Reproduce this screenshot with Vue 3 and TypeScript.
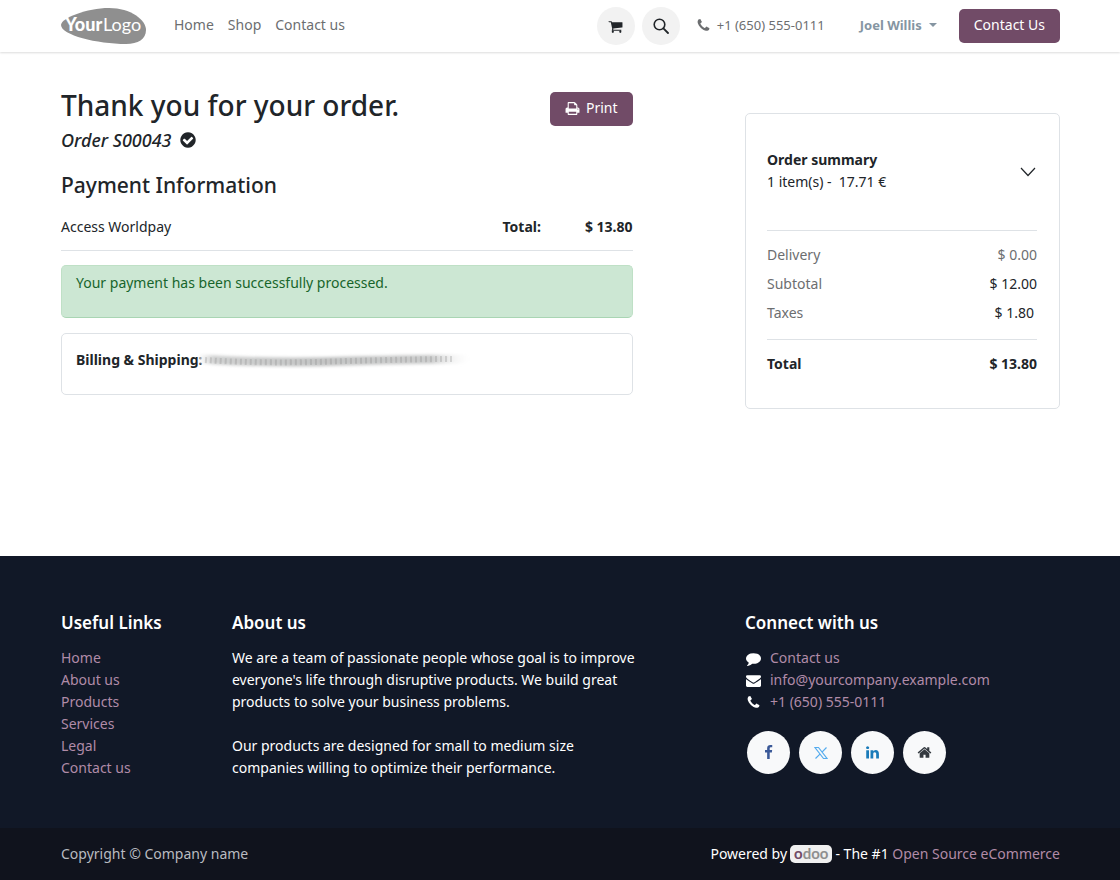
<script setup lang="ts">
import { ref } from 'vue'

interface Row {
  label: string
  amount: string
  kind: string
}

const navLinks: string[] = ['Home', 'Shop', 'Contact us']
const usefulLinks: string[] = ['Home', 'About us', 'Products', 'Services', 'Legal', 'Contact us']

const rows: Row[] = [
  { label: 'Delivery', amount: '$ 0.00', kind: 'muted' },
  { label: 'Subtotal', amount: '$ 12.00', kind: 'plain' },
  { label: 'Taxes', amount: '$ 1.80', kind: 'inset' },
]

const open = ref<boolean>(true)

const icons = {
  cart: 'M704 1536q0 52-38 90t-90 38-90-38-38-90 38-90 90-38 90 38 38 90zm896 0q0 52-38 90t-90 38-90-38-38-90 38-90 90-38 90 38 38 90zm128-1088v512q0 24-16.5 42.5t-40.5 21.5l-1044 122q13 60 13 70 0 16-24 64h920q26 0 45 19t19 45-19 45-45 19h-1024q-26 0-45-19t-19-45q0-11 8-31.5t16-36 21.5-40 15.5-29.5l-177-823h-204q-26 0-45-19t-19-45 19-45 45-19h256q16 0 28.5 6.5t19.5 15.5 13 24.5 8 26 5.5 29.5 4.5 26h1201q26 0 45 19t19 45z',
  phone: 'M1600 1240q0 27-10 70.5t-21 68.5q-21 50-122 106-94 51-186 51-27 0-53-3.5t-57.5-12.5-47-14.5-55.5-20.5-49-18q-98-35-175-83-127-79-264-216t-216-264q-48-77-83-175-3-9-18-49t-20.5-55.5-14.5-47-12.5-57.5-3.5-53q0-92 51-186 56-101 106-122 25-11 68.5-21t70.5-10q14 0 21 3 18 6 53 76 11 19 30 54t35 63.5 31 53.5q3 4 17.5 25t21.5 35.5 7 28.5q0 20-28.5 50t-62 55-62 53-28.5 46q0 9 5 22.5t8.5 20.5 14 24 11.5 19q76 137 174 235t235 174q2 1 19 11.5t24 14 20.5 8.5 22.5 5q18 0 46-28.5t53-62 55-62 50-28.5q14 0 28.5 7t35.5 21.5 25 17.5q25 15 53.5 31t63.5 35 54 30q70 35 76 53 3 7 3 21z',
  check: 'M1412 734q0-28-18-46l-91-90q-19-19-45-19t-45 19l-408 407-226-226q-19-19-45-19t-45 19l-91 90q-18 18-18 46 0 27 18 45l362 362q19 19 45 19 27 0 46-19l543-543q18-18 18-45zm252 162q0 209-103 385.5t-279.5 279.5-385.5 103-385.5-103-279.5-279.5-103-385.5 103-385.5 279.5-279.5 385.5-103 385.5 103 279.5 279.5 103 385.5z',
  print: 'M448 1536h896v-256h-896v256zm0-640h896v-384h-160q-40 0-68-28t-28-68v-160h-640v640zm1152 64q0-26-19-45t-45-19-45 19-19 45 19 45 45 19 45-19 19-45zm128 0v416q0 13-9.5 22.5t-22.5 9.5h-224v160q0 40-28 68t-68 28h-960q-40 0-68-28t-28-68v-160h-224q-13 0-22.5-9.5t-9.5-22.5v-416q0-79 56.5-135.5t135.5-56.5h64v-544q0-40 28-68t68-28h672q40 0 88 20t76 48l152 152q28 28 48 76t20 88v256h64q79 0 135.5 56.5t56.5 135.5z',
  comment: 'M1792 896q0 174-120 321.5t-326 233-450 85.5q-70 0-145-8-198 175-460 242-49 14-114 22-17 2-30.5-9t-17.5-29v-1q-3-4-.5-12t2-10 4.5-9.5l6-9 7-8.5 8-9q7-8 31-34.5t34.5-38 31-39.5 32.5-51 27-59 26-76q-157-89-247.5-220t-90.5-281q0-130 71-248.5t191-204.5 286-136.5 348-50.5q244 0 450 85.5t326 233 120 321.5z',
  envelope: 'M1792 710v794q0 66-47 113t-113 47h-1472q-66 0-113-47t-47-113v-794q44 49 101 87 362 246 497 345 57 42 92.5 65.5t94.5 48 110 24.5h2q51 0 110-24.5t94.5-48 92.5-65.5q170-123 498-345 57-39 100-87zm0-294q0 79-49 151t-122 123q-376 261-468 325-10 7-42.5 31t-54 38.5-52 32.5-57.5 27-50 9h-2q-23 0-50-9t-57.5-27-52-32.5-54-38.5-42.5-31q-91-64-262-182.5t-205-142.5q-62-42-117-115.5t-55-136.5q0-78 41.5-130t118.5-52h1472q65 0 112.5 47t47.5 113z',
  facebook: 'M1343 12v264h-157q-86 0-116 36t-30 108v189h293l-39 296h-254v759h-306v-759h-255v-296h255v-218q0-186 104-288.5t277-102.5q147 0 228 12z',
  linkedin: 'M477 625v991h-330v-991h330zm21-306q1 73-50.5 122t-135.5 49h-2q-82 0-132-49t-50-122q0-74 51.5-122.5t134.5-48.5 133 48.5 51 122.5zm1166 729v568h-329v-530q0-105-40.5-164.5t-126.5-59.5q-63 0-105.5 34.5t-63.5 85.5q-11 30-11 81v553h-329q2-399 2-647t-1-296l-1-48h329v144h-2q20-32 41-56t56.5-52 87-43.5 114.5-15.5q171 0 275 113.5t104 332.5z',
  home: 'M1472 992v480q0 26-19 45t-45 19h-384v-384h-256v384h-384q-26 0-45-19t-19-45v-480q0-1 .5-3t.5-3l575-474 575 474q1 2 1 6zm223-69l-62 74q-8 9-21 11h-3q-13 0-21-7l-692-577-692 577q-12 8-24 7-13-2-21-11l-62-74q-8-10-7-23.5t11-21.5l719-599q32-26 76-26t76 26l244 204v-195q0-14 9-23t23-9h192q14 0 23 9t9 23v408l219 182q10 8 11 21.5t-7 23.5z',
}

const contacts = [
  { icon: icons.comment, text: 'Contact us' },
  { icon: icons.envelope, text: 'info@yourcompany.example.com' },
  { icon: icons.phone, text: '+1 (650) 555-0111' },
]
</script>

<template>
  <div class="page">
    <header class="topbar">
      <a href="#" class="logo" aria-label="YourLogo">
        <svg viewBox="0 0 86 36" width="86" height="36">
          <path
            d="M0 17C0 10 26 0 48 0C70 0 85 12 85 22C85 31 77 36 65 36C36 36 0 27 0 17Z"
            fill="#8f8f8f"
          />
          <text x="4" y="23" class="logo-bold">Your</text>
          <text x="42" y="23" class="logo-thin">Logo</text>
        </svg>
      </a>
      <nav class="nav" aria-label="Main">
        <a v-for="link in navLinks" :key="link" href="#">{{ link }}</a>
      </nav>
      <div class="tools">
        <button type="button" class="round" aria-label="Cart">
          <svg viewBox="0 0 1792 1792" width="15" height="15"><path :d="icons.cart" fill="currentColor" /></svg>
        </button>
        <button type="button" class="round" aria-label="Search">
          <svg viewBox="0 0 16 16" width="16" height="16">
            <circle cx="6.500" cy="6.500" r="5.300" fill="none" stroke="currentColor" stroke-width="1.600" />
            <path d="M10.400 10.400L15 15" stroke="currentColor" stroke-width="1.800" stroke-linecap="round" />
          </svg>
        </button>
      </div>
      <a href="#" class="phone">
        <svg viewBox="0 0 1792 1792" width="15" height="15"><path :d="icons.phone" fill="currentColor" /></svg>
        <span>+1 (650) 555-0111</span>
      </a>
      <button type="button" class="user">
        Joel Willis
        <svg viewBox="0 0 8 4" width="8" height="4"><path d="M0 0H8L4 4Z" fill="currentColor" /></svg>
      </button>
      <a href="#" class="btn">Contact Us</a>
    </header>

    <main class="grid main">
      <section class="order">
        <div class="heading">
          <div>
            <h1>Thank you for your order.</h1>
            <p class="ref">
              <em>Order S00043</em>
              <svg viewBox="0 0 1792 1792" width="18" height="18"><path :d="icons.check" fill="currentColor" /></svg>
            </p>
          </div>
          <button type="button" class="btn print">
            <svg viewBox="0 0 1792 1792" width="15" height="15"><path :d="icons.print" fill="currentColor" /></svg>
            Print
          </button>
        </div>
        <h2>Payment Information</h2>
        <table class="payment">
          <tbody>
            <tr>
              <td>Access Worldpay</td>
              <th scope="row">Total:</th>
              <td class="amount">$ 13.80</td>
            </tr>
          </tbody>
        </table>
        <div class="alert" role="status">Your payment has been successfully processed.</div>
        <div class="address">
          <span class="address-label">
            Billing &amp; Shipping:
            <svg class="smudge" viewBox="0 0 276 20" width="276" height="20" aria-hidden="true">
              <defs>
                <linearGradient id="fade" x1="0" x2="276" y1="0" y2="0" gradientUnits="userSpaceOnUse">
                  <stop offset="0" stop-color="#fff" stop-opacity="0.600" />
                  <stop offset="0.060" stop-color="#d0d1d1" />
                  <stop offset="0.450" stop-color="#c4c5c5" />
                  <stop offset="0.850" stop-color="#cccdcd" />
                  <stop offset="1" stop-color="#fff" stop-opacity="0" />
                </linearGradient>
                <filter id="soft" x="-10%" y="-200%" width="120%" height="500%">
                  <feGaussianBlur stdDeviation="1.500" />
                </filter>
                <filter id="softer" x="-10%" y="-200%" width="120%" height="500%">
                  <feGaussianBlur stdDeviation="0.700" />
                </filter>
              </defs>
              <path
                d="M2 9C50 12 100 13 150 11C190 10 230 9 274 9"
                fill="none"
                stroke="url(#fade)"
                stroke-width="9"
                filter="url(#soft)"
              />
              <path
                d="M8 10C50 13 100 13 150 11C190 10 230 9 256 9"
                fill="none"
                stroke="#888"
                stroke-opacity="0.300"
                stroke-width="6"
                stroke-dasharray="2 3"
                filter="url(#softer)"
              />
            </svg>
          </span>
        </div>
      </section>

      <aside class="summary">
        <div class="summary-head">
          <div>
            <strong>Order summary</strong>
            <p>1 item(s) - &nbsp;17.71 €</p>
          </div>
          <button type="button" class="chevron" aria-label="Toggle order summary" :aria-expanded="open" @click="open = !open">
            <svg viewBox="0 0 16 10" width="16" height="10">
              <path d="M1 1L8 8.500L15 1" fill="none" stroke="currentColor" stroke-width="1.200" />
            </svg>
          </button>
        </div>
        <table v-if="open" class="totals">
          <tbody>
            <tr v-for="row in rows" :key="row.label">
              <th scope="row">{{ row.label }}</th>
              <td :class="row.kind">{{ row.amount }}</td>
            </tr>
          </tbody>
          <tfoot>
            <tr>
              <th scope="row">Total</th>
              <td>$ 13.80</td>
            </tr>
          </tfoot>
        </table>
      </aside>
    </main>

    <footer class="footer">
      <div class="grid footer-main">
        <section class="useful">
          <h3>Useful Links</h3>
          <ul>
            <li v-for="link in usefulLinks" :key="link"><a href="#">{{ link }}</a></li>
          </ul>
        </section>
        <section class="about">
          <h3>About us</h3>
          <p>
            We are a team of passionate people whose goal is to improve everyone's life through disruptive products. We
            build great products to solve your business problems.
          </p>
          <p>Our products are designed for small to medium size<br />companies willing to optimize their performance.</p>
        </section>
        <section class="connect">
          <h3>Connect with us</h3>
          <ul>
            <li v-for="item in contacts" :key="item.text">
              <svg viewBox="0 0 1792 1792" width="15" height="15"><path :d="item.icon" fill="currentColor" /></svg>
              <a href="#">{{ item.text }}</a>
            </li>
          </ul>
          <div class="social">
            <a href="#" aria-label="Facebook" class="fb">
              <svg viewBox="0 0 1792 1792" width="15" height="15"><path :d="icons.facebook" fill="currentColor" /></svg>
            </a>
            <a href="#" aria-label="X" class="tw">
              <svg viewBox="0 0 14 14" width="14" height="14" fill="none" stroke="currentColor">
                <path d="M1 1.500H4.500L13 12.500H9.500ZM12.500 1.500L7.800 6.300M6.200 7.900L1.500 12.500" stroke-width="1.200" />
              </svg>
            </a>
            <a href="#" aria-label="LinkedIn" class="li">
              <svg viewBox="0 0 1792 1792" width="15" height="15"><path :d="icons.linkedin" fill="currentColor" /></svg>
            </a>
            <a href="#" aria-label="Website" class="web">
              <svg viewBox="0 0 1792 1792" width="15" height="15"><path :d="icons.home" fill="currentColor" /></svg>
            </a>
          </div>
        </section>
      </div>
      <div class="copyright">
        <span class="owner">Copyright © Company name</span>
        <span class="powered">
          Powered by
          <a href="#" class="badge" aria-label="odoo"><span class="first">o</span>doo</a>
          <span>- The #1 <a href="#">Open Source eCommerce</a></span>
        </span>
      </div>
    </footer>
  </div>
</template>

<style>
body {
  margin: 0;
  background: #fff;
}
</style>

<style scoped>
.page {
  display: flex;
  flex-direction: column;
  min-height: 100vh;
  font-family: 'Noto Sans', 'Open Sans', sans-serif;
  font-size: 14px;
  line-height: 22px;
  color: #212529;
}
h1,
h2,
h3,
p,
ul {
  margin: 0;
  padding: 0;
  font-weight: 500;
}
p,
ul {
  font-weight: 400;
  list-style: none;
}
a {
  text-decoration: none;
}
button {
  font: inherit;
  border: 0;
  background: none;
  padding: 0;
  cursor: pointer;
}
svg {
  display: block;
  flex: none;
}
table {
  width: 100%;
  border-collapse: collapse;
}
th,
td {
  padding: 0;
  text-align: left;
}
.topbar {
  display: flex;
  align-items: center;
  height: 52px;
  padding: 0 60px 0 61px;
  box-shadow: 0 1px 2px rgba(0, 0, 0, 0.14);
}
.logo-bold,
.logo-thin {
  font-family: Lato, sans-serif;
  font-weight: 900;
  font-size: 18px;
  fill: #fff;
}
.logo-thin {
  font-weight: 400;
}
.nav {
  display: flex;
  gap: 14px;
  margin-left: 27px;
  padding-bottom: 2px;
}
.nav a {
  color: #6c6e70;
}
.tools {
  display: flex;
  gap: 7px;
  margin-left: auto;
}
.round {
  display: flex;
  align-items: center;
  justify-content: center;
  width: 38px;
  height: 38px;
  border-radius: 50%;
  background: #f2f2f2;
  color: #212529;
}
.phone {
  display: flex;
  align-items: center;
  gap: 6px;
  margin-left: 16px;
  padding-bottom: 2px;
  font-size: 13px;
  color: #6c6e70;
}
.user {
  display: flex;
  align-items: center;
  gap: 7px;
  margin: 0 22px 0 35px;
  padding-bottom: 2px;
  font-size: 13px;
  font-weight: 700;
  color: #8595a2;
}
.btn {
  display: flex;
  align-items: center;
  box-sizing: border-box;
  height: 34px;
  padding: 0 15px 2px;
  border-radius: 5px;
  background: #714b67;
  color: #fff;
}
.grid {
  display: grid;
  grid-template-columns: repeat(12, minmax(0, 1fr));
  column-gap: 27px;
  padding: 0 60px 0 61px;
}
.main {
  flex: 1;
  align-content: start;
  align-items: start;
  padding-top: 35px;
  padding-bottom: 60px;
}
.order {
  grid-column: 1 / span 7;
}
.heading {
  display: flex;
  justify-content: space-between;
  align-items: flex-start;
}
h1 {
  font-size: 28px;
  line-height: 36px;
}
.ref {
  display: flex;
  align-items: center;
  gap: 7px;
  margin-top: 4px;
  font-size: 18px;
  line-height: 26px;
  font-weight: 500;
}
.print {
  gap: 6px;
  margin-top: 5px;
}
h2 {
  margin-top: 18px;
  font-size: 21px;
  line-height: 28px;
}
.payment {
  margin-top: 5px;
  border-bottom: 1px solid #dee2e6;
}
.payment td,
.payment th {
  height: 46px;
}
.payment th {
  width: 80px;
}
.payment .amount {
  width: 50px;
  font-weight: 700;
  text-align: right;
  white-space: nowrap;
}
.alert {
  box-sizing: border-box;
  min-height: 53px;
  margin-top: 14px;
  padding: 6px 14px;
  border: 1px solid #bfe0c6;
  border-bottom-color: #a9d5b3;
  border-radius: 5px;
  background: #cce7d3;
  color: #17652b;
}
.address {
  margin-top: 15px;
  padding: 15px 14px 23px;
  border: 1px solid #dee2e6;
  border-radius: 5px;
  font-weight: 700;
}
.address-label {
  position: relative;
}
.smudge {
  position: absolute;
  left: 100%;
  top: 0;
  margin-left: -6px;
}
.summary {
  grid-column: 9 / span 4;
  margin-top: 26px;
  padding: 35px 22px 33px 21px;
  border: 1px solid #dee2e6;
  border-radius: 5px;
}
.summary-head {
  display: flex;
  justify-content: space-between;
  align-items: center;
  padding-bottom: 37px;
  border-bottom: 1px solid #dee2e6;
}
.chevron {
  padding: 9px 1px 7px;
  color: #212529;
}
.totals {
  margin-top: 9px;
}
.totals th {
  font-weight: 400;
  color: #6c6e70;
}
.totals td {
  text-align: right;
}
.totals tbody tr {
  height: 29px;
}
.totals tbody tr:last-child {
  height: 41px;
  vertical-align: top;
}
.totals tbody tr:last-child th,
.totals tbody tr:last-child td {
  padding-top: 4px;
}
.totals .muted {
  color: #6c6e70;
}
.totals .inset {
  padding-right: 3px;
}
.totals tfoot {
  border-top: 1px solid #dee2e6;
}
.totals tfoot th,
.totals tfoot td {
  padding-top: 13px;
  font-weight: 700;
  color: #212529;
}
.footer {
  background: #111827;
  color: #fff;
}
.footer a {
  color: #b08ba7;
}
.footer-main {
  padding-top: 54px;
  padding-bottom: 49px;
}
.useful {
  grid-column: 1 / span 2;
}
.about {
  grid-column: 3 / span 5;
  margin-right: -14px;
}
.about p + p {
  margin-top: 22px;
}
.connect {
  grid-column: 9 / span 4;
}
h3 {
  margin-bottom: 11px;
  font-size: 17px;
  font-weight: 600;
  line-height: 26px;
}
.connect li {
  display: flex;
  align-items: center;
  gap: 9px;
  padding-left: 1px;
}
.social {
  display: flex;
  gap: 9px;
  margin: 18px 0 0 2px;
}
.social a {
  display: flex;
  align-items: center;
  justify-content: center;
  width: 43px;
  height: 43px;
  border-radius: 50%;
  background: #f8f9fa;
}
.social .fb {
  color: #3b5998;
}
.social .tw {
  color: #55acee;
}
.social .li {
  color: #1a7bb9;
}
.social .web {
  color: #343a40;
}
.copyright {
  display: flex;
  justify-content: space-between;
  align-items: center;
  height: 52px;
  padding: 0 60px 0 61px;
  background: #10131d;
}
.owner {
  color: #b9bbc0;
}
.powered {
  display: flex;
  align-items: center;
  gap: 3px;
}
.footer .badge {
  height: 18px;
  padding: 0 4px;
  border-radius: 5px;
  background: #f0f0f0;
  font-family: Lato, sans-serif;
  font-size: 15px;
  line-height: 16px;
  font-weight: 700;
  color: #8f8f8f;
}
.badge .first {
  color: #714b67;
}
</style>
